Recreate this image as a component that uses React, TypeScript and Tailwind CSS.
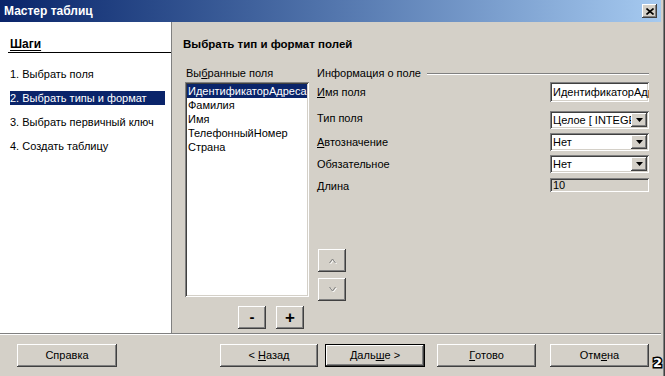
import { ReactNode } from 'react';

const raised =
  'bg-[#d4d0c8] shadow-[inset_-1px_-1px_#404040,inset_1px_1px_#ffffff,inset_-2px_-2px_#808080,inset_2px_2px_#d4d0c8]';
const sunken =
  'shadow-[inset_1px_1px_#808080,inset_-1px_-1px_#ffffff,inset_2px_2px_#404040,inset_-2px_-2px_#d4d0c8]';

const steps = ['1. Выбрать поля', '2. Выбрать типы и формат', '3. Выбрать первичный ключ', '4. Создать таблицу'];
const fields = ['ИдентификаторАдреса', 'Фамилия', 'Имя', 'ТелефонныйНомер', 'Страна'];

function Btn({ children, className = '', isDefault = false }: { children: ReactNode; className?: string; isDefault?: boolean }) {
  return (
    <div
      className={`flex items-center justify-center h-[23px] text-[11px] text-black ${raised} ${
        isDefault ? 'outline outline-1 outline-black -outline-offset-1 shadow-[inset_-2px_-2px_#404040,inset_2px_2px_#ffffff,inset_-3px_-3px_#808080]' : ''
      } ${className}`}
    >
      {children}
    </div>
  );
}

function Combo({ value }: { value: string }) {
  return (
    <div className={`flex h-[18px] w-[99px] bg-white p-[2px] ${sunken}`}>
      <span className="flex-1 overflow-hidden whitespace-nowrap leading-[14px] pl-[1px]">{value}</span>
      <span className={`flex w-[16px] items-center justify-center ${raised}`}>
        <svg width="7" height="4" viewBox="0 0 7 4">
          <path d="M0 0h7L3.5 4z" fill="#000" />
        </svg>
      </span>
    </div>
  );
}

function Row({ label, children, className = '', labelClass = '' }: { label: ReactNode; children: ReactNode; className?: string; labelClass?: string }) {
  return (
    <div className={`flex items-center justify-between ${className}`}>
      <span className={labelClass}>{label}</span>
      {children}
    </div>
  );
}

function Chevron({ up }: { up?: boolean }) {
  const d = up ? 'M1.5 6L4.5 2L7.5 6' : 'M1.5 1L4.5 5L7.5 1';
  return (
    <svg width="9" height="7" viewBox="0 0 9 7">
      <path d={d} fill="none" stroke="#fff" strokeWidth="1" transform="translate(1 1)" />
      <path d={d} fill="none" stroke="#808080" strokeWidth="1" />
    </svg>
  );
}

export default function App() {
  return (
    <div
      className="relative flex h-[376px] w-[665px] flex-col overflow-hidden bg-[#d4d0c8] pr-[4px] text-[11px] text-black shadow-[inset_-1px_0_#404040,inset_-2px_0_#808080]"
      style={{ fontFamily: '"Liberation Sans", Arial, sans-serif' }}
    >
      {/* title bar */}
      <div className="flex h-[22px] items-center bg-gradient-to-r from-[#0a246a] to-[#a6caf0] pl-[4px] pr-[4px]">
        <span className="flex-1 text-[12px] font-bold text-white">Мастер таблиц</span>
        <span className={`flex h-[14px] w-[15px] items-center justify-center ${raised}`}>
          <svg width="8" height="7" viewBox="0 0 8 7">
            <path d="M0.5 0.5L7.5 6.5M7.5 0.5L0.5 6.5" stroke="#000" strokeWidth="1.6" />
          </svg>
        </span>
      </div>

      {/* body */}
      <div className="flex h-[311px]">
        <div className="w-[172px] border-r border-[#808080] bg-white pl-[8px]">
          <div className="mt-[15px] border-b border-black pb-[1px] pl-[2px] text-[12px] font-bold leading-[14px] underline underline-offset-2">
            Шаги
          </div>
          <div className="mt-[14px] flex flex-col gap-[10px] pl-[2px]">
            {steps.map((s, i) => (
              <div
                key={s}
                className={`h-[14px] w-[155px] text-[11px] leading-[14px] ${i === 1 ? 'bg-[#0a246a] text-white' : ''}`}
              >
                {s}
              </div>
            ))}
          </div>
        </div>

        <div className="flex-1 pl-[11px]">
          <div className="mt-[15px] text-[11.5px] font-bold leading-[14px]">Выбрать тип и формат полей</div>
          <div className="mt-[16px] flex">
            <div className="ml-[2px] w-[124px]">
              <div className="pl-[1px] leading-[13px]">
                Вы<span className="underline">б</span>ранные поля
              </div>
              <div className={`mt-[2px] h-[215px] bg-white p-[2px] ${sunken}`}>
                {fields.map((f, i) => (
                  <div key={f} className={`h-[14px] whitespace-nowrap pl-[1px] leading-[14px] ${i === 0 ? 'bg-[#0a246a] text-white' : ''}`}>
                    {f}
                  </div>
                ))}
              </div>
              <div className="ml-[53px] mt-[9px] flex gap-[10px]">
                <Btn className="w-[28px] text-[15px] font-bold">-</Btn>
                <Btn className="w-[28px] text-[17px] font-bold">+</Btn>
              </div>
            </div>

            <div className="ml-[8px] flex w-[332px] flex-col">
              <div className="flex items-center leading-[13px]">
                <span>Информация о поле</span>
                <span className="ml-[6px] h-[2px] flex-1 border-b border-t border-b-white border-t-[#808080]" />
              </div>
              <Row
                className="mt-[2px] h-[20px]"
                label={
                  <>
                    <span className="underline">И</span>мя поля
                  </>
                }
              >
                <div className={`flex h-[20px] w-[99px] items-center overflow-hidden whitespace-nowrap bg-white px-[3px] ${sunken}`}>
                  ИдентификаторАдреса
                </div>
              </Row>
              <Row className="mt-[9px] h-[18px]" labelClass="mb-[4px]" label="Тип поля">
                <Combo value="Целое [ INTEGER ]" />
              </Row>
              <Row
                className="mt-[4px] h-[18px]"
                label={
                  <>
                    <span className="underline">А</span>втозначение
                  </>
                }
              >
                <Combo value="Нет" />
              </Row>
              <Row className="mt-[4px] h-[18px]" label="Обязательное">
                <Combo value="Нет" />
              </Row>
              <Row className="mt-[5px] h-[14px]" labelClass="mt-[2px]" label="Длина">
                <div className={`h-[14px] w-[99px] bg-[#d4d0c8] pl-[3px] pt-[1px] text-[11px] leading-[12px] ${sunken}`}>10</div>
              </Row>
              <div className="ml-[1px] mt-[57px] flex flex-col gap-[6px]">
                <Btn className="h-[22px] w-[28px]">
                  <Chevron up />
                </Btn>
                <Btn className="h-[22px] w-[28px]">
                  <Chevron />
                </Btn>
              </div>
            </div>
          </div>
        </div>
      </div>

      {/* footer */}
      <div className="h-[2px] border-b border-t border-b-white border-t-[#808080]" />
      <div className="flex pt-[9px]">
        <Btn className="ml-[17px] w-[100px]">Справка</Btn>
        <Btn className="ml-[103px] w-[98px]">
          &lt;&nbsp;<span className="underline">Н</span>азад
        </Btn>
        <Btn isDefault className="ml-[7px] w-[100px]">
          Даль<span className="underline">ш</span>е &gt;
        </Btn>
        <Btn className="ml-[12px] w-[99px]">
          <span className="underline">Г</span>отово
        </Btn>
        <Btn className="ml-[14px] w-[99px]">
          Отм<span className="underline">е</span>на
        </Btn>
      </div>

      <span
        className="absolute bottom-[7px] right-[3px] text-[13px] font-black leading-[13px] text-white [paint-order:stroke_fill] [-webkit-text-stroke:3px_#000]"
        style={{ fontFamily: '"DejaVu Sans", sans-serif' }}
      >
        2
      </span>
    </div>
  );
}
